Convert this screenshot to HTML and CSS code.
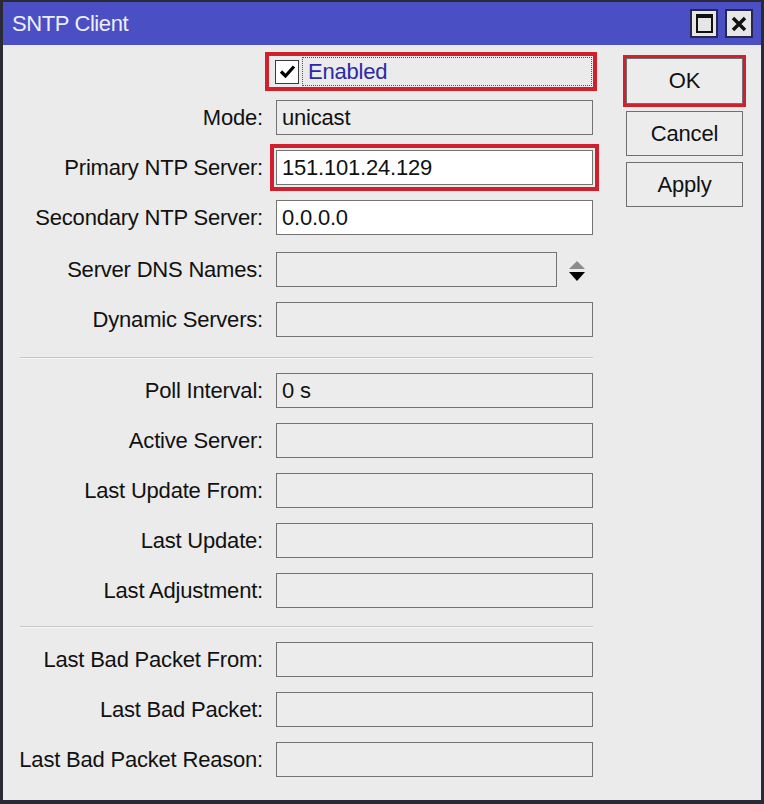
FILE: index.html
```html
<html lang="en">
<head>
    <meta charset="UTF-8">
    <title>SNTP Client</title>
    <link rel="stylesheet" href="styles.css">
</head>
<body>
    <div class="window">
        <div class="titlebar">
            <span class="title">SNTP Client</span>
            <div class="title-buttons">
                <span class="tbtn"><span class="max-icon"></span></span>
                <span class="tbtn">
                    <svg width="16" height="16" viewBox="0 0 16 16"><path d="M2 2 L14 14 M14 2 L2 14" stroke="#111" stroke-width="3.4"/></svg>
                </span>
            </div>
        </div>
        <div class="content">
            <div class="form">
                <div class="row row-enabled">
                    <span class="label"></span>
                    <div class="enabled-box">
                        <span class="checkbox">
                            <svg width="17" height="15" viewBox="0 0 17 15"><path d="M2 7.5 L6.5 12 L15 2.5" fill="none" stroke="#000" stroke-width="3.2"/></svg>
                        </span>
                        <span class="focus-text">Enabled</span>
                    </div>
                </div>
                <div class="row">
                    <span class="label">Mode:</span>
                    <div class="field">unicast</div>
                </div>
                <div class="row">
                    <span class="label">Primary NTP Server:</span>
                    <div class="field field-white highlight">151.101.24.129</div>
                </div>
                <div class="row">
                    <span class="label">Secondary NTP Server:</span>
                    <div class="field field-white">0.0.0.0</div>
                </div>
                <div class="row row-low">
                    <span class="label">Server DNS Names:</span>
                    <div class="field field-short"></div>
                    <svg class="spinner" width="20" height="26" viewBox="0 0 20 26">
                        <path d="M10 4 L18 12 L2 12 Z" fill="#8c8c8c"/>
                        <path d="M2 15 L18 15 L10 24 Z" fill="#000"/>
                    </svg>
                </div>
                <div class="row">
                    <span class="label">Dynamic Servers:</span>
                    <div class="field"></div>
                </div>
                <div class="separator sep-first"></div>
                <div class="row">
                    <span class="label">Poll Interval:</span>
                    <div class="field">0 s</div>
                </div>
                <div class="row">
                    <span class="label">Active Server:</span>
                    <div class="field"></div>
                </div>
                <div class="row">
                    <span class="label">Last Update From:</span>
                    <div class="field"></div>
                </div>
                <div class="row">
                    <span class="label">Last Update:</span>
                    <div class="field"></div>
                </div>
                <div class="row">
                    <span class="label">Last Adjustment:</span>
                    <div class="field"></div>
                </div>
                <div class="separator"></div>
                <div class="row">
                    <span class="label">Last Bad Packet From:</span>
                    <div class="field"></div>
                </div>
                <div class="row">
                    <span class="label">Last Bad Packet:</span>
                    <div class="field"></div>
                </div>
                <div class="row">
                    <span class="label">Last Bad Packet Reason:</span>
                    <div class="field"></div>
                </div>
            </div>
            <div class="side">
                <div class="btn btn-ok">OK</div>
                <div class="btn">Cancel</div>
                <div class="btn">Apply</div>
            </div>
        </div>
    </div>
</body>
</html>
```

FILE: styles.css
```css
body {
    margin: 0;
    font-family: "Liberation Sans", Arial, sans-serif;
}

.window {
    width: 764px;
    height: 804px;
    box-sizing: border-box;
    border: 3px solid #2a2a36;
    border-top-width: 2px;
    border-bottom-width: 4px;
    background-color: #ebebeb;
    display: flex;
    flex-direction: column;
}

.titlebar {
    height: 43px;
    background-color: #4a4fc3;
    display: flex;
    align-items: center;
    justify-content: space-between;
    padding: 0 8px 0 9px;
}

.title {
    color: #eeeefb;
    font-size: 22px;
    letter-spacing: -0.4px;
}

.title-buttons {
    display: flex;
    gap: 7px;
}

.tbtn {
    width: 24px;
    height: 25px;
    background-color: #e6e6e6;
    border: 2px solid #262650;
    display: flex;
    align-items: center;
    justify-content: center;
}

.max-icon {
    width: 13px;
    height: 13px;
    border: 2px solid #111;
    border-top-width: 4px;
}

.content {
    flex: 1;
    display: flex;
}

.form {
    padding-top: 7px;
}

.row {
    display: flex;
    align-items: center;
    height: 35px;
    margin-bottom: 15px;
}

.row-enabled {
    height: 39px;
    margin-bottom: 9px;
}

.row-low {
    margin-top: 17px;
}

.label {
    width: 260px;
    margin-right: 13px;
    text-align: right;
    font-size: 22px;
    letter-spacing: -0.2px;
    color: #111;
}

.field {
    width: 317px;
    height: 35px;
    box-sizing: border-box;
    border: 1px solid #737373;
    background-color: #ececec;
    font-size: 22px;
    color: #111;
    padding: 0 5px;
    line-height: 33px;
    letter-spacing: -0.2px;
}

.field-white {
    background-color: #fff;
}

.field-short {
    width: 281px;
}

.highlight {
    outline: 4px solid #d21f2c;
    outline-offset: 2px;
}

.spinner {
    margin-left: 10px;
}

.enabled-box {
    margin-left: -11px;
    width: 332px;
    height: 39px;
    box-sizing: border-box;
    border: 4px solid #d21f2c;
    display: flex;
    align-items: center;
    padding-left: 6px;
}

.checkbox {
    width: 22px;
    height: 22px;
    border: 1px solid #3a3a3a;
    background-color: #fff;
    display: flex;
    align-items: center;
    justify-content: center;
}

.focus-text {
    flex: 1;
    margin-left: 3px;
    margin-right: 1px;
    height: 27px;
    line-height: 27px;
    border: 1px dotted #5a5a20;
    padding-left: 5px;
    font-size: 22px;
    letter-spacing: -0.2px;
    color: #2a2aa6;
}

.separator {
    width: 573px;
    margin: 18px 0 14px 17px;
    height: 1px;
    background-color: #c6c6c6;
    border-bottom: 1px solid #f6f6f6;
}

.sep-first {
    margin-top: 20px;
}

.side {
    margin-left: 29px;
    padding-top: 10px;
    display: flex;
    flex-direction: column;
    gap: 6px;
}

.btn {
    width: 117px;
    height: 45px;
    box-sizing: border-box;
    border: 1px solid #6f6f6f;
    background-color: #ececec;
    font-size: 22px;
    color: #111;
    display: flex;
    align-items: center;
    justify-content: center;
    letter-spacing: -0.2px;
}

.btn-ok {
    height: 46px;
    outline: 3px solid #d21f2c;
    margin-top: 3px;
    margin-bottom: 1px;
}
```
